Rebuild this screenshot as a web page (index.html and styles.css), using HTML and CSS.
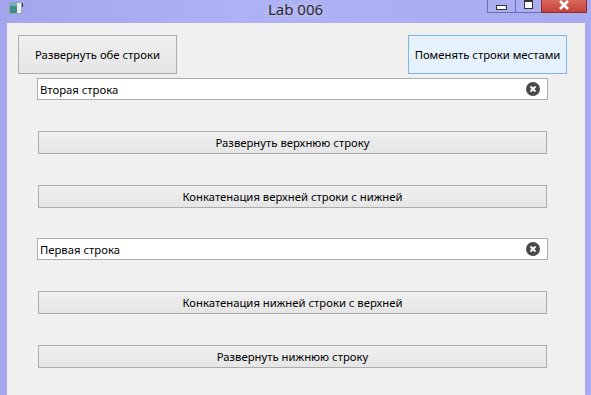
FILE: index.html
```html
<!DOCTYPE html>
<html lang="ru">
<head>
    <meta charset="UTF-8">
    <title>Lab 006</title>
    <link rel="stylesheet" href="styles.css">
</head>
<body>
    <div class="window">
        <div class="titlebar">
            <svg class="app-icon" width="15" height="12" viewBox="0 0 15 12">
                <rect x="0.5" y="0.5" width="12" height="11" fill="#e8eef2" stroke="#9aa4b0"/>
                <rect x="1" y="1" width="7" height="10" fill="#3f8f84"/>
                <rect x="1" y="1" width="7" height="3" fill="#6fb0c8"/>
                <rect x="13" y="1" width="1" height="4" fill="#333"/>
            </svg>
            <div class="title">Lab 006</div>
            <div class="controls">
                <div class="ctl ctl-min"><span></span></div>
                <div class="ctl ctl-max"><span></span></div>
                <div class="ctl ctl-close">
                    <svg width="12" height="10" viewBox="0 0 12 10">
                        <path d="M2 1 L10 9 M10 1 L2 9" stroke="#fff" stroke-width="2.6"/>
                    </svg>
                </div>
            </div>
        </div>
        <div class="client">
            <div class="top-row">
                <button class="btn big">Развернуть обе строки</button>
                <button class="btn big hot">Поменять строки местами</button>
            </div>
            <div class="rows">
                <div class="field">
                    <span class="value">Вторая строка</span>
                    <svg class="clear" width="14" height="14" viewBox="0 0 14 14">
                        <circle cx="7" cy="7" r="7" fill="#4a4a4a"/>
                        <path d="M4.5 4.5 L9.5 9.5 M9.5 4.5 L4.5 9.5" stroke="#fff" stroke-width="1.9"/>
                    </svg>
                </div>
                <button class="btn row">Развернуть верхнюю строку</button>
                <button class="btn row">Конкатенация верхней строки с нижней</button>
                <div class="field">
                    <span class="value">Первая строка</span>
                    <svg class="clear" width="14" height="14" viewBox="0 0 14 14">
                        <circle cx="7" cy="7" r="7" fill="#4a4a4a"/>
                        <path d="M4.5 4.5 L9.5 9.5 M9.5 4.5 L4.5 9.5" stroke="#fff" stroke-width="1.9"/>
                    </svg>
                </div>
                <button class="btn row">Конкатенация нижней строки с верхней</button>
                <button class="btn row">Развернуть нижнюю строку</button>
            </div>
        </div>
    </div>
</body>
</html>
```

FILE: styles.css
```css
html, body { margin: 0; height: 100%; overflow: hidden; }
body { font-family: "Noto Sans", "Open Sans", sans-serif; font-size: 11.3px; color: #000; background: #a9acf0; }
.window { display: flex; flex-direction: column; height: 100%; background: linear-gradient(90deg, #a3a6ee 0%, #aeb1f3 40%, #a8abef 100%); }
.titlebar { height: 23px; display: flex; align-items: flex-start; position: relative; }
.app-icon { margin: 2px 0 0 9px; }
.title { position: absolute; left: 0; right: 0; top: 0; text-align: center; font-size: 15px; line-height: 19px; color: #2b2b2b; text-shadow: 0 0 8px rgba(255,255,255,0.6); }
.controls { margin-left: auto; margin-right: 4px; display: flex; height: 13px; }
.ctl { height: 13px; border: 1px solid #6b6fb8; border-top: none; display: flex; align-items: center; justify-content: center; box-sizing: border-box; }
.ctl-min { width: 28px; background: #abaef0; border-right: none; }
.ctl-min span { width: 9px; height: 3px; background: #fff; border: 1px solid #333; margin-top: 2px; }
.ctl-max { width: 26px; background: #abaef0; border-right: none; }
.ctl-max span { width: 7px; height: 6px; border: 1px solid #333; border-top-width: 2px; background: #fff; margin-top: -3px; }
.ctl-close { width: 46px; background: linear-gradient(#d9685d, #c5433a); border-color: #8a2e28; }
.ctl-close svg { margin-top: -2px; }
.client { flex: 1; margin: 0 6px 0 7px; background: #f0f0f0; padding: 12px 18px 0 11px; }
.top-row { display: flex; justify-content: space-between; }
.btn { font-family: inherit; font-size: 11.3px; color: #000; border: 1px solid #acacac; background: linear-gradient(#f0f0f0, #e5e5e5); padding: 0; box-sizing: border-box; }
.btn.big { width: 159px; height: 39px; }
.btn.hot { background: #e5f1fb; border-color: #7eb4ea; }
.rows { display: flex; flex-direction: column; margin: 4px 19px 0; }
.field { height: 22px; box-sizing: border-box; border: 1px solid #abadb3; background: #fff; display: flex; align-items: center; padding: 0 7px 0 2px; }
.field .value { flex: 1; }
.btn.row { height: 23px; margin: 31px 1px 0; }
.rows > .field:nth-child(4) { margin-top: 30px; }
```
